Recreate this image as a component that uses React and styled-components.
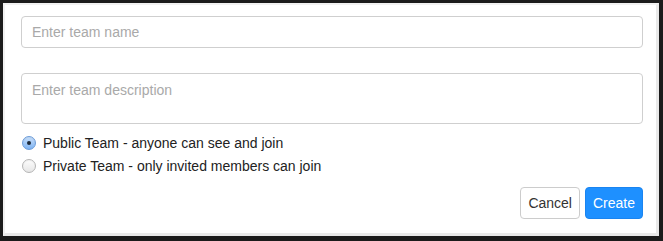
import React, { useState } from "react";
import styled, { createGlobalStyle } from "styled-components";

const GlobalStyle = createGlobalStyle`
  html, body {
    margin: 0;
    padding: 0;
    background: #1b1b1b;
  }
  body {
    font-family: "Liberation Sans", Arial, sans-serif;
  }
`;

const Frame = styled.div`
  width: 663px;
  height: 241px;
  box-sizing: border-box;
  padding: 3px 4px 5px 3px;
`;

const Panel = styled.div`
  height: 100%;
  box-sizing: border-box;
  background: #fff;
  border-top: 2px solid #f1f1f1;
  border-left: 2px solid #f1f1f1;
  border-right: 3px solid #e9e9e9;
  border-bottom: 3px solid #e9e9e9;
  padding: 11px 13px 0 16px;
  display: flex;
  flex-direction: column;
`;

const Field = styled.input`
  box-sizing: border-box;
  width: 100%;
  height: 32px;
  padding: 6px 10px;
  border: 1px solid #cfcfcf;
  border-radius: 4px;
  font: 14px "Liberation Sans", Arial, sans-serif;
  color: #333;
  outline: none;
  &::placeholder {
    color: #a9a9a9;
  }
`;

const Area = styled.textarea`
  box-sizing: border-box;
  width: 100%;
  height: 51px;
  margin-top: 25px;
  padding: 8px 10px;
  border: 1px solid #cfcfcf;
  border-radius: 4px;
  font: 14px "Liberation Sans", Arial, sans-serif;
  color: #333;
  resize: none;
  outline: none;
  display: block;
  &::placeholder {
    color: #a9a9a9;
  }
`;

const Options = styled.div`
  margin-top: 9px;
  display: flex;
  flex-direction: column;
  gap: 4px;
`;

const Option = styled.label`
  display: flex;
  align-items: center;
  gap: 7px;
  height: 19px;
  font-size: 14px;
  color: #222;
  cursor: pointer;
`;

const Radio = styled.input.attrs({ type: "radio" })`
  appearance: none;
  margin: 0 0 0 1px;
  width: 14px;
  height: 14px;
  border-radius: 50%;
  border: 1px solid #b5b5b5;
  background: linear-gradient(#fdfdfd, #e6e6e6);
  box-shadow: inset 0 1px 1px rgba(0, 0, 0, 0.05);
  display: grid;
  place-items: center;
  &:checked {
    border-color: #6b9bd8;
    background: linear-gradient(#c9e0fb, #7eb3f2);
  }
  &:checked::after {
    content: "";
    width: 4px;
    height: 4px;
    border-radius: 50%;
    background: #1d2a3a;
  }
`;

const Actions = styled.div`
  margin-top: 12px;
  display: flex;
  justify-content: flex-end;
  gap: 5px;
`;

const Button = styled.button`
  height: 32px;
  margin: 0;
  padding: 0 7px;
  border-radius: 4px;
  font: 14px "Liberation Sans", Arial, sans-serif;
  cursor: pointer;
  border: 1px solid ${(p) => (p.$primary ? "#1a84f0" : "#cccccc")};
  background: ${(p) => (p.$primary ? "#1e90ff" : "#ffffff")};
  color: ${(p) => (p.$primary ? "#ffffff" : "#333333")};
`;

export default function App() {
  const [visibility, setVisibility] = useState("public");
  return (
    <>
      <GlobalStyle />
      <Frame>
        <Panel>
          <Field placeholder="Enter team name" />
          <Area placeholder="Enter team description" />
          <Options>
            <Option>
              <Radio
                name="vis"
                checked={visibility === "public"}
                onChange={() => setVisibility("public")}
              />
              Public Team - anyone can see and join
            </Option>
            <Option>
              <Radio
                name="vis"
                checked={visibility === "private"}
                onChange={() => setVisibility("private")}
              />
              Private Team - only invited members can join
            </Option>
          </Options>
          <Actions>
            <Button>Cancel</Button>
            <Button $primary>Create</Button>
          </Actions>
        </Panel>
      </Frame>
    </>
  );
}
